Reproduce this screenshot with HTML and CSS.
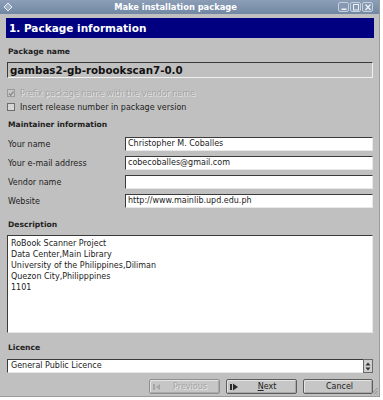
FILE: index.html
```html
<!DOCTYPE html>
<html lang="en">
<head>
<meta charset="UTF-8">
<title>Make installation package</title>
<link rel="stylesheet" href="styles.css">
</head>
<body>
<div class="window">
    <div class="titlebar">
        <span class="win-icon">
            <svg width="10" height="10" viewBox="0 0 10 10"><path d="M5 1 L9 5 L5 9 L1 5 Z" fill="#9fb0c6" stroke="#e8eef6" stroke-width="1"/></svg>
        </span>
        <span class="title">Make installation package</span>
        <span class="win-buttons">
            <span class="win-btn"><svg width="8" height="7" viewBox="0 0 8 7"><rect x="1.5" y="4.5" width="5" height="1.5" fill="#eef2f7"/></svg></span>
            <span class="win-btn"><svg width="8" height="7" viewBox="0 0 8 7"><rect x="1.5" y="0.5" width="5" height="5.5" fill="none" stroke="#eef2f7" stroke-width="1"/></svg></span>
            <span class="win-btn"><svg width="8" height="7" viewBox="0 0 8 7"><path d="M1.5 0.5 L6.5 6 M6.5 0.5 L1.5 6" stroke="#eef2f7" stroke-width="1.3"/></svg></span>
        </span>
    </div>
    <div class="content">
        <div class="section-title">1. Package information</div>

        <div class="group-label first">Package name</div>
        <div class="package-name">gambas2-gb-robookscan7-0.0</div>

        <div class="check-row disabled">
            <span class="checkbox checked">
                <svg width="7" height="7" viewBox="0 0 7 7"><path d="M1 3.5 L3 5.5 L6.5 1" fill="none" stroke="#8c8c8c" stroke-width="1.6"/></svg>
            </span>
            <span>Prefix package name with the vendor name</span>
        </div>
        <div class="check-row">
            <span class="checkbox"></span>
            <span>Insert release number in package version</span>
        </div>

        <div class="group-label maint">Maintainer information</div>
        <div class="form">
            <div class="form-row"><span class="form-label">Your name</span><span class="input">Christopher M. Coballes</span></div>
            <div class="form-row"><span class="form-label">Your e-mail address</span><span class="input">cobecoballes@gmail.com</span></div>
            <div class="form-row"><span class="form-label">Vendor name</span><span class="input"></span></div>
            <div class="form-row"><span class="form-label">Website</span><span class="input">http://www.mainlib.upd.edu.ph</span></div>
        </div>

        <div class="group-label desc">Description</div>
        <div class="textarea">RoBook Scanner Project
Data Center,Main Library
University of the Philippines,Diliman
Quezon City,Philipppines
1101</div>

        <div class="group-label lic">Licence</div>
        <div class="combo">
            <span class="combo-text">General Public Licence</span>
            <span class="combo-btn">
                <svg width="6" height="9" viewBox="0 0 6 9"><path d="M3 0.5 L5.5 3.5 L0.5 3.5 Z M3 8.5 L5.5 5.5 L0.5 5.5 Z" fill="#333"/></svg>
            </span>
        </div>

        <div class="buttons">
            <div class="button disabled">
                <svg class="btn-icon" width="8" height="8" viewBox="0 0 8 8"><rect x="0" y="1" width="2" height="6" fill="#a6a6a6"/><path d="M7 1 L3 4 L7 7 Z" fill="#a6a6a6"/></svg>
                <span class="btn-text">Previous</span>
            </div>
            <div class="button">
                <svg class="btn-icon" width="8" height="8" viewBox="0 0 8 8"><rect x="0" y="1" width="2" height="6" fill="#2a2a2a"/><path d="M3 0.5 L8 4 L3 7.5 Z" fill="#2a2a2a"/></svg>
                <span class="btn-text"><u>N</u>ext</span>
            </div>
            <div class="button plain">
                <span class="btn-text">Cancel</span>
            </div>
        </div>
    </div>
    <svg class="grip" width="8" height="8" viewBox="0 0 8 8"><path d="M7.5 1 L1 7.5 M7.5 4 L4 7.5 M7.5 6.5 L6.5 7.5" stroke="#8a8a8a" stroke-width="1"/></svg>
</div>
</body>
</html>
```

FILE: styles.css
```css
body {
    margin: 0;
    background-color: #fff;
    font-family: "DejaVu Sans", Verdana, sans-serif;
    font-size: 8px;
    color: #222;
}
.window {
    position: relative;
    width: 380px;
    height: 397px;
    box-sizing: border-box;
    background-color: #c0c0c0;
    border-right: 1px solid #9a9a9a;
    border-bottom: 1px solid #9a9a9a;
    display: flex;
    flex-direction: column;
}
.titlebar {
    height: 14px;
    background: linear-gradient(#8d9fb7, #7187a3);
    display: flex;
    align-items: center;
    padding: 0 6px 0 3px;
}
.win-icon {
    width: 10px;
    height: 10px;
    display: flex;
}
.title {
    flex: 1;
    text-align: center;
    color: #fff;
    font-weight: bold;
    font-size: 8.3px;
}
.win-buttons {
    display: flex;
    gap: 1px;
}
.win-btn {
    width: 9px;
    height: 8px;
    border: 1px solid #c6d1de;
    border-radius: 2px;
    background: #8599b3;
    display: flex;
    align-items: center;
    justify-content: center;
}
.content {
    display: flex;
    flex-direction: column;
    padding: 4px 5px 0 6px;
}
.section-title {
    height: 20px;
    line-height: 20px;
    background-color: #000080;
    color: #fff;
    font-weight: bold;
    font-size: 10.5px;
    padding-left: 3px;
}
.group-label {
    height: 12px;
    line-height: 12px;
    font-weight: bold;
    font-size: 7.6px;
    margin: 0 1px 0 2px;
}
.group-label.first { margin-top: 8px; }
.group-label.maint { margin-top: 5px; }
.group-label.desc { margin-top: 11px; }
.group-label.lic { margin-top: 9px; }
.package-name {
    margin: 4px 1px 0 1px;
    height: 16px;
    line-height: 15px;
    box-sizing: border-box;
    border: 1px solid;
    border-color: #3a3a3a #f0f0f0 #f0f0f0 #3a3a3a;
    padding-left: 2px;
    font-weight: bold;
    font-size: 10.3px;
    color: #111;
}
.check-row {
    height: 14px;
    display: flex;
    align-items: center;
    gap: 5px;
    margin-left: 1px;
}
.package-name + .check-row { margin-top: 8px; }
.checkbox {
    width: 8px;
    height: 8px;
    box-sizing: border-box;
    border: 1px solid #6c6c6c;
    background-color: #d6d6d6;
    display: flex;
    align-items: center;
    justify-content: center;
}
.check-row.disabled {
    color: #a4a4a4;
    text-shadow: 1px 1px 0 #e6e6e6;
}
.check-row.disabled .checkbox {
    border-color: #9a9a9a;
    background-color: #c8c8c8;
}
.form {
    display: flex;
    flex-direction: column;
    gap: 5px;
    margin: 6px 1px 0 1px;
}
.form-row {
    display: flex;
    align-items: center;
    height: 14px;
}
.form-label {
    width: 117px;
    padding-left: 1px;
}
.input, .textarea, .combo-text {
    background-color: #fff;
    box-sizing: border-box;
    border: 1px solid;
    border-color: #3a3a3a #e8e8e8 #e8e8e8 #3a3a3a;
}
.input {
    flex: 1;
    height: 14px;
    line-height: 12px;
    padding-left: 2px;
}
.textarea {
    margin: 4px 1px 0 1px;
    height: 98px;
    padding: 2px 3px;
    line-height: 11px;
    white-space: pre;
}
.combo {
    margin: 5px 1px 0 1px;
    height: 14px;
    display: flex;
}
.combo-text {
    flex: 1;
    line-height: 12px;
    padding-left: 3px;
    border-right: none;
}
.combo-btn {
    width: 10px;
    box-sizing: border-box;
    border: 1px solid #6a6a6a;
    background-color: #cfcfcf;
    display: flex;
    align-items: center;
    justify-content: center;
}
.buttons {
    display: flex;
    justify-content: flex-end;
    gap: 6px;
    margin: 6px 1px 0 0;
}
.button {
    width: 71px;
    height: 15px;
    box-sizing: border-box;
    border: 1px solid #5c5c5c;
    border-radius: 2px;
    background-color: #c6c6c6;
    box-shadow: inset 1px 1px 0 #e4e4e4, inset -1px -1px 0 #a8a8a8;
    display: flex;
    align-items: center;
    padding-left: 3px;
}
.button.plain { width: 70px; }
.button.disabled {
    border-color: #909090;
    color: #a4a4a4;
    text-shadow: 1px 1px 0 #e6e6e6;
}
.btn-text {
    flex: 1;
    text-align: center;
}
.grip {
    position: absolute;
    right: 1px;
    bottom: 1px;
}
```
